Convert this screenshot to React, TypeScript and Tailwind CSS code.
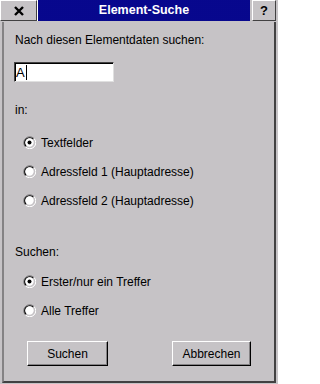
import React from "react";

const font = { fontFamily: '"Liberation Sans", Arial, sans-serif' };

function Radio({ checked }: { checked?: boolean }) {
  return (
    <svg width="13" height="13" viewBox="0 0 13 13" className="shrink-0">
      <path d="M11 2.5 A6 6 0 0 0 2.5 11" fill="none" stroke="#7b797b" strokeWidth="1" />
      <path d="M10.3 3.2 A5 5 0 0 0 3.2 10.3" fill="none" stroke="#000" strokeWidth="1.2" />
      <path d="M2.5 11 A6 6 0 0 0 11 2.5" fill="none" stroke="#fff" strokeWidth="1" />
      <circle cx="6.5" cy="6.5" r="4.2" fill="#fff" />
      {checked && <circle cx="6.5" cy="6.5" r="2" fill="#000" />}
    </svg>
  );
}

function RadioRow({ label, checked }: { label: string; checked?: boolean }) {
  return (
    <div className="flex items-center h-[29px] pl-[19px] gap-[5px]">
      <Radio checked={checked} />
      <span className="text-[12px] text-black leading-none">{label}</span>
    </div>
  );
}

function Button({ label, className }: { label: string; className?: string }) {
  return (
    <div
      className={`flex items-center justify-center h-[25px] text-[12px] text-black bg-[#c6c3c6] border border-t-white border-l-white border-r-black border-b-black shadow-[inset_-1px_-1px_0_#848284] ${className ?? ""}`}
    >
      {label}
    </div>
  );
}

export default function App() {
  return (
    <div className="w-[278px] h-[384px] bg-[#c6c3c6] flex flex-col overflow-hidden" style={font}>
      {/* Title bar */}
      <div className="flex h-[22px] shrink-0">
        <div className="w-[37px] h-[21px] flex items-center justify-center bg-[#c6c3c6] border border-t-white border-l-white border-r-[#424142] border-b-[#424142]">
          <svg width="10" height="10" viewBox="0 0 10 10">
            <path d="M1 1 L9 9 M9 1 L1 9" stroke="#000" strokeWidth="2.4" />
          </svg>
        </div>
        <div className="w-px h-[21px] bg-white" />
        <div
          className="flex-1 h-[21px] flex items-center justify-center text-white text-[12.5px] font-bold"
          style={{
            backgroundColor: "#000080",
            backgroundImage:
              "radial-gradient(circle, #10109c 0.6px, transparent 0.8px)",
            backgroundSize: "2px 2px",
          }}
        >
          Element-Suche
        </div>
        <div className="w-[2px]" />
        <div className="w-[24px] h-[21px] flex items-center justify-center bg-[#c6c3c6] border border-t-white border-l-white border-r-[#424142] border-b-[#424142] text-[13px] font-bold text-black">
          ?
        </div>
        <div className="w-[2px]" />
      </div>

      {/* Body */}
      <div className="flex-1 flex flex-col mx-[2px] mb-[1px] border-2 border-t-0 border-l-[#848284] border-r-[#424142] border-b-[#424142]">
        <div className="text-[12px] text-black pl-[11px] pt-[10px] leading-[16px]">
          Nach diesen Elementdaten suchen:
        </div>
        <div className="ml-[10px] mt-[14px] w-[100px] h-[20px] bg-white border border-t-[#424142] border-l-[#424142] border-r-[#e0e0e0] border-b-[#e0e0e0] shadow-[inset_1px_1px_0_#000] flex items-center pl-[1px]">
          <span className="text-[13px] text-black leading-none">A</span>
          <span className="w-px h-[15px] bg-black ml-[1px]" />
        </div>
        <div className="text-[12px] text-black pl-[11px] mt-[20px] leading-[16px]">in:</div>
        <div className="mt-[10px]">
          <RadioRow label="Textfelder" checked />
          <RadioRow label="Adressfeld 1 (Hauptadresse)" />
          <RadioRow label="Adressfeld 2 (Hauptadresse)" />
        </div>
        <div className="text-[12px] text-black pl-[11px] mt-[29px] leading-[16px]">Suchen:</div>
        <div className="mt-[7px]">
          <RadioRow label="Erster/nur ein Treffer" checked />
          <RadioRow label="Alle Treffer" />
        </div>
        <div className="flex justify-between mt-[16px] pl-[23px] pr-[23px]">
          <Button label="Suchen" className="w-[81px]" />
          <Button label="Abbrechen" className="w-[79px]" />
        </div>
      </div>
    </div>
  );
}
